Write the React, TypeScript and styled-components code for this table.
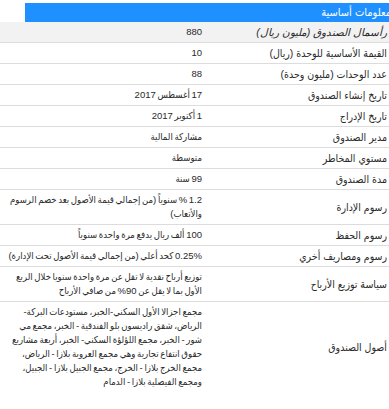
import styled, { createGlobalStyle } from 'styled-components'

const GlobalStyle = createGlobalStyle`
  html, body {
    margin: 0;
    padding: 0;
    background: #fff;
    overflow: hidden;
  }
`

type Row = {
  label: string
  value: string
  italic?: boolean
  shaded?: boolean
}

const rows: Row[] = [
  { label: 'رأسمال الصندوق (مليون ريال)', value: '880', italic: true, shaded: true },
  { label: 'القيمة الأساسية للوحدة (ريال)', value: '10' },
  { label: 'عدد الوحدات (مليون وحدة)', value: '88' },
  { label: 'تاريخ إنشاء الصندوق', value: '17 أغسطس 2017' },
  { label: 'تاريخ الإدراج', value: '1 أكتوبر 2017' },
  { label: 'مدير الصندوق', value: 'مشاركة المالية' },
  { label: 'مستوي المخاطر', value: 'متوسطة' },
  { label: 'مدة الصندوق', value: '99 سنة' },
  {
    label: 'رسوم الإدارة',
    value: '1.2 % سنوياً (من إجمالي قيمة الأصول بعد خصم الرسوم والأتعاب)',
  },
  { label: 'رسوم الحفظ', value: '100 ألف ريال يدفع مرة واحدة سنوياً' },
  {
    label: 'رسوم ومصاريف أخري',
    value: '0.25% كحد أعلي (من إجمالي قيمة الأصول تحت الإدارة)',
  },
  {
    label: 'سياسة توزيع الأرباح',
    value: 'توزيع أرباح نقدية لا تقل عن مرة واحدة سنويا خلال الربع الأول بما لا يقل عن 90% من صافي الأرباح',
  },
  {
    label: 'أصول الصندوق',
    value:
      'مجمع اجزالا الأول السكني-الخبر، مستودعات البركة- الرياض، شقق راديسون بلو الفندقية - الخبر، مجمع مي شور - الخبر، مجمع اللؤلؤة السكني- الخبر، أربعة مشاريع حقوق انتفاع تجارية وهي مجمع العروبة بلازا - الرياض، مجمع الخرج بلازا - الخرج، مجمع الجبيل بلازا - الجبيل، ومجمع الفيصلية بلازا - الدمام',
  },
]

export default function App() {
  return (
    <>
      <GlobalStyle />
      <Panel>
        <Heading>معلومات أساسية</Heading>
        <Table>
          <tbody>
            {rows.map((row, i) => (
              <TableRow key={i} shaded={row.shaded} last={i === rows.length - 1}>
                <LabelCell italic={row.italic}>{row.label}</LabelCell>
                <ValueCell>{row.value}</ValueCell>
              </TableRow>
            ))}
          </tbody>
        </Table>
      </Panel>
    </>
  )
}

const Panel = styled.div`
  width: 392px;
  direction: rtl;
  padding-top: 3px;
  font-family: 'Liberation Sans', 'DejaVu Sans Condensed', 'DejaVu Sans', sans-serif;
  font-size: 10px;
  color: #2a2a2a;
`

const Heading = styled.div`
  margin-left: 25px;
  height: 19px;
  line-height: 19px;
  padding-right: 1px;
  background: #1e90ff;
  color: #fff;
  font-size: 11px;
`

const Table = styled.table`
  width: 100%;
  border-collapse: collapse;
  table-layout: fixed;
`

const TableRow = styled.tr.withConfig({
  shouldForwardProp: (p) => p !== 'shaded' && p !== 'last',
})<{ shaded?: boolean; last?: boolean }>`
  background: ${(p) => (p.shaded ? '#f2f2f2' : '#fff')};
  border-bottom: ${(p) => (p.last ? 'none' : '1px solid #dcdcdc')};
`

const LabelCell = styled.td.withConfig({
  shouldForwardProp: (p) => p !== 'italic',
})<{ italic?: boolean }>`
  width: 180px;
  padding: 3px 5px 3px 0;
  line-height: 14px;
  font-size: 10.5px;
  text-align: right;
  vertical-align: middle;
  font-style: ${(p) => (p.italic ? 'italic' : 'normal')};
`

const ValueCell = styled.td`
  padding: 3px 5px 3px 3px;
  line-height: 14px;
  font-size: 9.5px;
  word-spacing: -1px;
  text-align: right;
  vertical-align: middle;
`
